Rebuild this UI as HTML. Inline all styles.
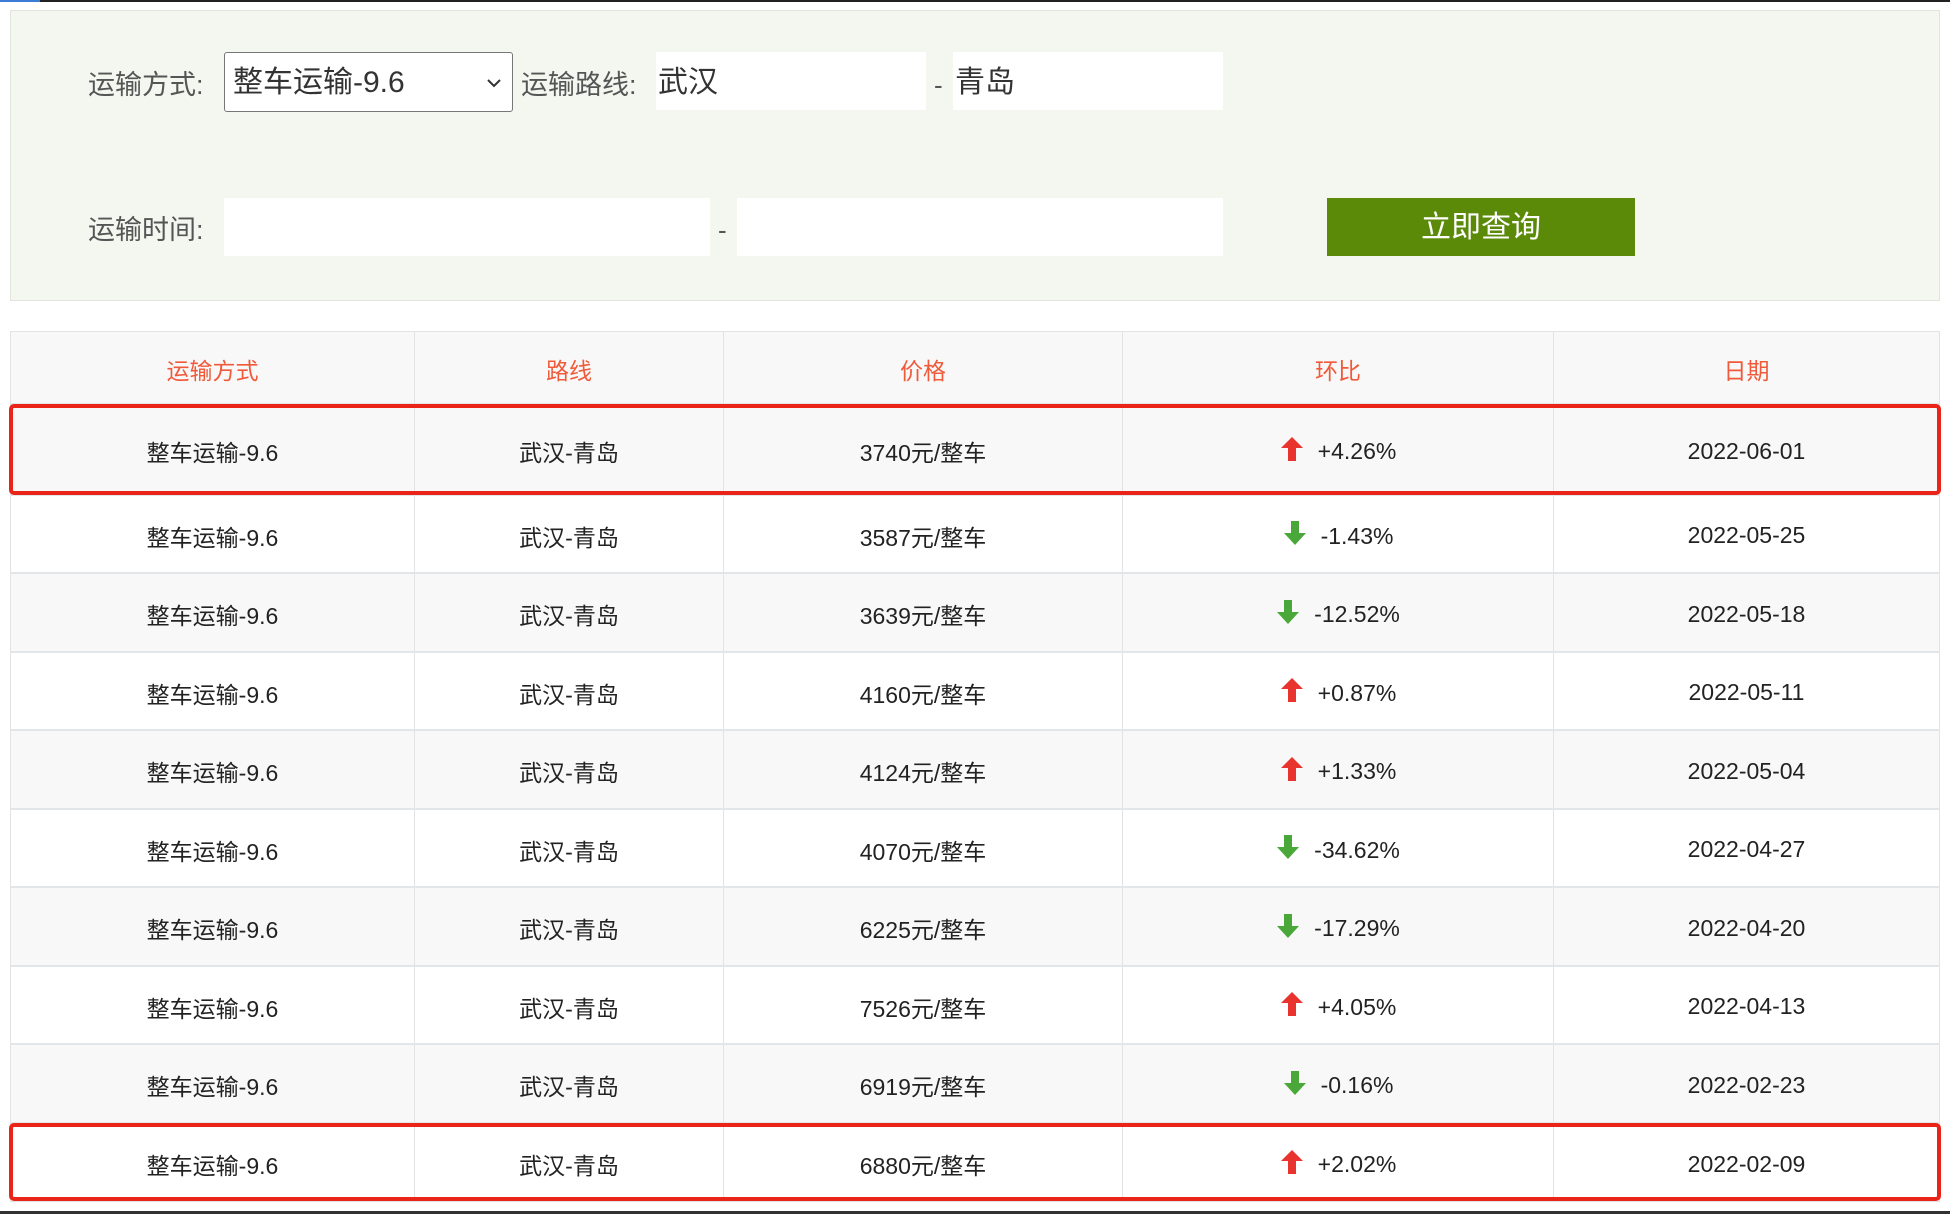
<!DOCTYPE html>
<html><head><meta charset="utf-8">
<style>
*{box-sizing:border-box;margin:0;padding:0}
body{width:1950px;height:1214px;background:#fff;position:relative;overflow:hidden;font-family:"Liberation Sans","Noto Sans CJK SC",sans-serif;color:#222}
.topline{position:absolute;left:40px;top:0;width:1910px;height:2px;background:#222}
.topblue{position:absolute;left:0;top:0;width:40px;height:2px;background:#3a7bd5}
.panel{position:absolute;left:10px;top:10px;width:1930px;height:291px;background:#f4f7f0;border:1px solid #e2e5de}
.lbl{position:absolute;font-size:27px;color:#555;line-height:30px}
.box{position:absolute;background:#fff;font-size:30px;line-height:62px;padding-left:2px;color:#333}
.sel{border:1px solid #777;border-radius:3px;padding-left:8px}
.btn{position:absolute;left:1327px;top:198px;width:308px;height:58px;background:#5b8a08;color:#fff;font-size:30px;text-align:center;line-height:60px}
.dash{position:absolute;font-size:26px;color:#555}
table{position:absolute;left:10px;top:331px;width:1930px;border-collapse:collapse;border:1px solid #e3e3e3}
td,th{border-left:1px solid #e3e3e3;border-right:1px solid #e3e3e3;text-align:center;font-size:23px;font-weight:normal;vertical-align:middle;padding-top:4px}
th{height:72px;color:#f05a3a;background:#f8f8f8}
td{height:78.5px;border-top:2px solid #e2e6e8;background:#fff}
tr.g td{background:#f8f8f8}
tr.first td{height:91px}
.ch{display:inline-flex;align-items:center;gap:14px;vertical-align:middle}
.ch svg{position:relative;top:-3px}
.hl{position:absolute;left:9px;width:1932px;border:4px solid #ea2418;border-radius:5px}
.bot{position:absolute;left:0;top:1211px;width:1950px;height:3px;background:#333}
</style></head><body>
<div class="topblue"></div><div class="topline"></div>
<div class="panel"></div>
<div class="lbl" style="left:88px;top:70px">运输方式:</div>
<div class="box sel" style="left:224px;top:52px;width:289px;height:60px;line-height:60px">整车运输-9.6<svg style="position:absolute;right:10px;top:24px" width="16" height="12"><path d="M2 3 L8 9 L14 3" stroke="#333" stroke-width="2" fill="none"/></svg></div>
<div class="lbl" style="left:521px;top:70px">运输路线:</div>
<div class="box" style="left:656px;top:52px;width:270px;height:58px">武汉</div>
<div class="dash" style="left:934px;top:70px">-</div>
<div class="box" style="left:953px;top:52px;width:270px;height:58px">青岛</div>
<div class="lbl" style="left:88px;top:215px">运输时间:</div>
<div class="box" style="left:224px;top:198px;width:486px;height:58px"></div>
<div class="dash" style="left:718px;top:215px">-</div>
<div class="box" style="left:737px;top:198px;width:486px;height:58px"></div>
<div class="btn">立即查询</div>
<table>
<colgroup><col style="width:404px"><col style="width:309px"><col style="width:399px"><col style="width:431px"><col></colgroup>
<tbody id="tb"><tr><th>运输方式</th><th>路线</th><th>价格</th><th>环比</th><th>日期</th></tr></tbody>
</table>
<script>
const d=[["3740",1,"+4.26%","2022-06-01"],["3587",0,"-1.43%","2022-05-25"],["3639",0,"-12.52%","2022-05-18"],["4160",1,"+0.87%","2022-05-11"],["4124",1,"+1.33%","2022-05-04"],["4070",0,"-34.62%","2022-04-27"],["6225",0,"-17.29%","2022-04-20"],["7526",1,"+4.05%","2022-04-13"],["6919",0,"-0.16%","2022-02-23"],["6880",1,"+2.02%","2022-02-09"]];
const up='<svg width="24" height="26" viewBox="0 0 24 26"><path d="M12 1 L23 12 L16 12 L16 25 L8 25 L8 12 L1 12 Z" fill="#e8332e"/></svg>';
const dn='<svg width="24" height="26" viewBox="0 0 24 26"><path d="M8 1 L16 1 L16 13 L23 13 L12 25 L1 13 L8 13 Z" fill="#4aa83a"/></svg>';
let h='';
d.forEach((r,i)=>{h+='<tr class="'+(i%2==0?'g':'')+(i==0?' first':'')+'"><td>整车运输-9.6</td><td>武汉-青岛</td><td>'+r[0]+'元/整车</td><td><span class="ch">'+(r[1]?up:dn)+'<span>'+r[2]+'</span></span></td><td>'+r[3]+'</td></tr>';});
document.getElementById('tb').insertAdjacentHTML('beforeend',h);
</script>
<div class="hl" style="top:404px;height:91px"></div>
<div class="hl" style="top:1123px;height:78px"></div>
<div class="bot"></div>
</body></html>
